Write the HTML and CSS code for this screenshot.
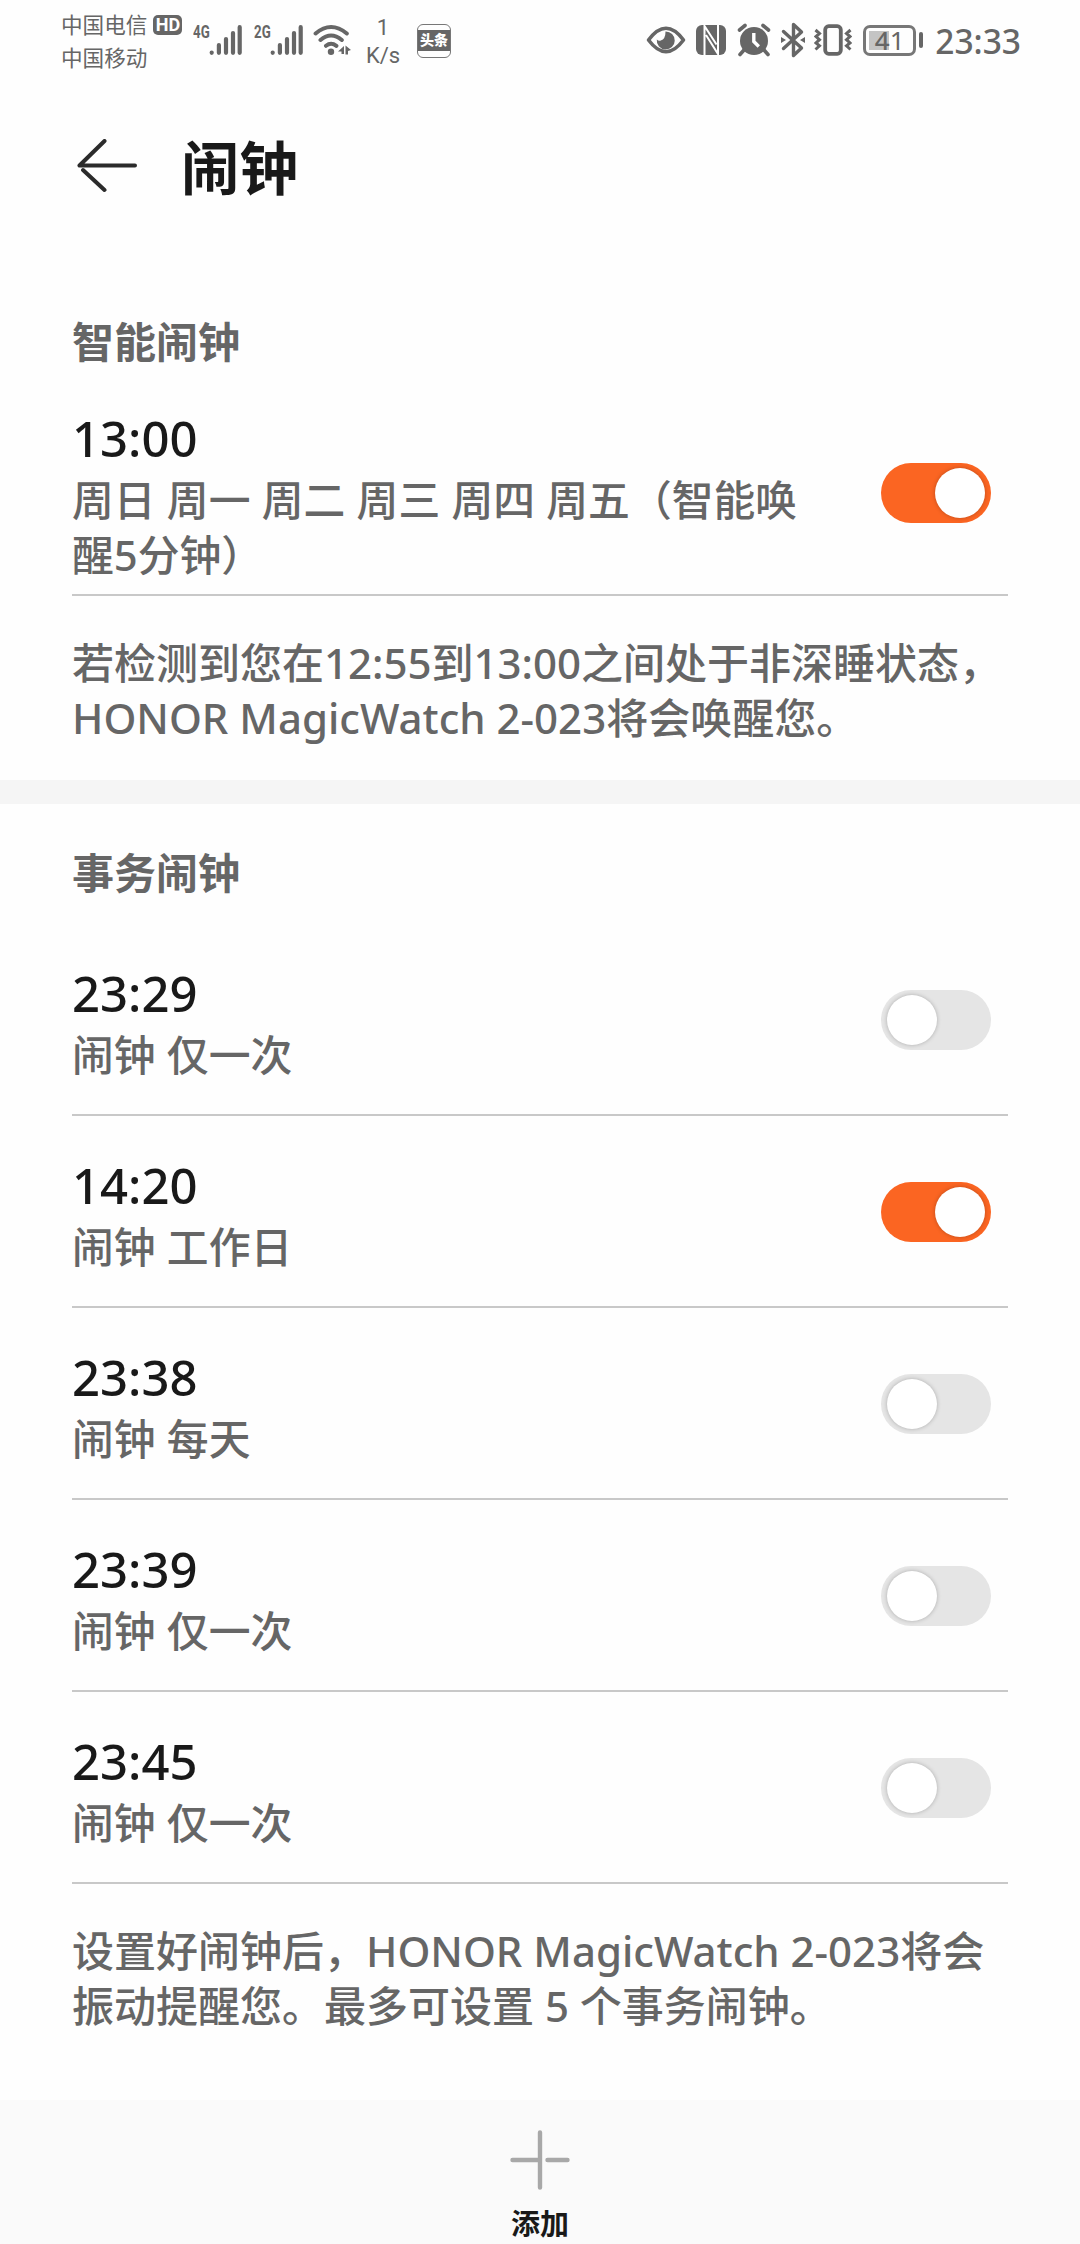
FILE: index.html
```html
<!DOCTYPE html>
<html lang="zh-CN">
<head>
<meta charset="utf-8">
<title>闹钟</title>
<link rel="stylesheet" href="styles.css">
</head>
<body>
<div class="screen">
  <header class="status">
    <div class="status-left">
      <div class="carriers">
        <div class="carrier">中国电信<span class="hd">HD</span></div>
        <div class="carrier">中国移动</div>
      </div>
      <div class="signal">
        <span class="net">4G</span>
        <svg width="34" height="32" viewBox="0 0 34 32" stroke="#666" stroke-width="4.2" stroke-linecap="round"><path d="M2.7 28.6v.2M9.900 21v7.8M17 15v13.8M24 9v19.8M30.7 3.2v25.6"/></svg>
      </div>
      <div class="signal">
        <span class="net">2G</span>
        <svg width="34" height="32" viewBox="0 0 34 32" stroke="#666" stroke-width="4.2" stroke-linecap="round"><path d="M2.7 28.6v.2M9.900 21v7.8M17 15v13.8M24 9v19.8M30.7 3.2v25.6"/></svg>
      </div>
      <svg class="wifi" width="38" height="32" viewBox="0 0 38 32"><g fill="none" stroke="#666" stroke-width="4" stroke-linecap="round"><path d="M2.6 9.5Q18 -3.5 33.8 9.5M7.5 16Q18 7 28.8 16M13 21.8Q18 17.8 23.4 21.8"/></g><circle cx="18" cy="27.800" r="3.200" fill="#666"/><path d="M31 22v8h-2.500v-2.500L25 27.500zM32.500 21.500l5.500 4.500-3 1v3.500h-2.500z" fill="#666"/></svg>
      <div class="speed"><span>1</span><span>K/s</span></div>
      <div class="news"><span>头条</span></div>
    </div>
    <div class="status-right">
      <svg width="40" height="34" viewBox="0 0 40 34"><path d="M2.500 17Q20-6.500 37.500 17Q20 40.500 2.500 17z" fill="none" stroke="#666" stroke-width="3.600" stroke-linejoin="round"/><path d="M19.500 8.500a9 9 0 1 1-8.700 8q1.700 1.700 4 1 4.800-1.500 4.700-9z" fill="#666"/></svg>
      <svg class="nfc" width="30" height="34" viewBox="0 0 30 34"><rect y="2" width="30" height="30" rx="6" fill="#666"/><path d="M8.500 32V3L20.500 21.500M10 12L22 31V2" fill="none" stroke="#fff" stroke-width="2"/></svg>
      <svg class="alarm" width="34" height="34" viewBox="0 0 34 34"><circle cx="17" cy="18" r="14" fill="#666"/><path d="M2.500 7L8 2.500M31.500 7L26 2.500M7 27l-4 4.500M27 27l4 4.500" stroke="#666" stroke-width="3.600" stroke-linecap="round"/><path d="M16.800 10v8.500l5 5" fill="none" stroke="#fff" stroke-width="3.400"/></svg>
      <svg class="bt" width="24" height="36" viewBox="0 0 24 36"><path d="M2.500 9.500L20.500 26L12.500 33.500V2.500L20.500 10L2.500 26.500" fill="none" stroke="#666" stroke-width="3.400" stroke-linejoin="round" stroke-linecap="round"/><path d="M0 15l5 3-5 3zM24 15l-5 3 5 3z" fill="#666"/></svg>
      <svg class="vibe" width="38" height="34" viewBox="0 0 38 34" fill="none" stroke="#666"><rect x="11.200" y="3.200" width="15.600" height="27.600" rx="3.500" stroke-width="3.800"/><path d="M1.500 7l4 3.500-3.500 3 3.500 3.200-3.500 3.200 3.500 3-4 3.600M36.500 7l-4 3.500 3.500 3-3.500 3.200 3.500 3.200-3.500 3 4 3.600" stroke-width="3"/></svg>
      <div class="battery"><b>4</b>1</div>
      <i class="nub"></i>
      <span class="clock">23:33</span>
    </div>
  </header>

  <div class="titlebar">
    <svg width="60" height="56" viewBox="0 0 60 56" fill="none" stroke="#2b2b2b" stroke-width="4" stroke-linecap="round"><path d="M27.500 2L2.500 26.500H58M27.500 51L6 31" stroke-linejoin="round"/></svg>
    <h1>闹钟</h1>
  </div>

  <section class="smart">
    <h2>智能闹钟</h2>
    <div class="alarm-row alarm-row-smart">
      <div class="info">
        <div class="time">13:00</div>
        <div class="desc">周日 周一 周二 周三 周四 周五（智能唤<br>醒5分钟）</div>
      </div>
      <div class="switch on"></div>
    </div>
    <p class="note">若检测到您在12:55到13:00之间处于非深睡状态，<br>HONOR MagicWatch 2-023将会唤醒您。</p>
  </section>

  <section class="events">
    <h2>事务闹钟</h2>
    <div class="alarm-row"><div class="info"><div class="time">23:29</div><div class="desc">闹钟 仅一次</div></div><div class="switch"></div></div>
    <div class="alarm-row"><div class="info"><div class="time">14:20</div><div class="desc">闹钟 工作日</div></div><div class="switch on"></div></div>
    <div class="alarm-row"><div class="info"><div class="time">23:38</div><div class="desc">闹钟 每天</div></div><div class="switch"></div></div>
    <div class="alarm-row"><div class="info"><div class="time">23:39</div><div class="desc">闹钟 仅一次</div></div><div class="switch"></div></div>
    <div class="alarm-row"><div class="info"><div class="time">23:45</div><div class="desc">闹钟 仅一次</div></div><div class="switch"></div></div>
    <p class="note">设置好闹钟后，HONOR MagicWatch 2-023将会<br>振动提醒您。最多可设置 5 个事务闹钟。</p>
  </section>

  <footer class="toolbar">
    <svg width="60" height="60" viewBox="0 0 60 60" stroke="#a8a8a8" stroke-width="4.400" stroke-linecap="round"><path d="M30 2.500v55M2.500 30H30M37.500 30h20"/></svg>
    <span>添加</span>
  </footer>
</div>
</body>
</html>
```

FILE: styles.css
```css
* { box-sizing: border-box; }
body {
  margin: 0;
  background: #fefefe;
  font-family: "Noto Sans", "Noto Sans CJK SC", sans-serif;
  color: #191919;
}
.screen {
  width: 1080px;
  height: 2244px;
  display: flex;
  flex-direction: column;
  overflow: hidden;
}
svg { display: block; flex: none; }

.status {
  height: 80px;
  display: flex;
  justify-content: space-between;
  align-items: flex-start;
  padding: 0 59px 0 61px;
  color: #666;
}
.status-left { display: flex; align-items: flex-start; }
.carriers { width: 132px; padding-top: 8px; }
.carrier {
  display: flex;
  align-items: center;
  gap: 6px;
  height: 33px;
  font-size: 21.6px;
  line-height: 33px;
  white-space: nowrap;
}
.hd {
  width: 29px;
  height: 20px;
  border-radius: 5px;
  background: #666;
  color: #fff;
  font: 700 18px/20px Roboto, sans-serif;
  text-align: center;
}
.signal { display: flex; width: 61px; padding-top: 24px; }
.net {
  width: 16px;
  font: 700 19px/16px Roboto, sans-serif;
  transform: scaleX(.7);
  transform-origin: left;
}
.wifi { margin: 24px 0 0 -2px; }
.speed {
  width: 50px;
  margin-left: 7px;
  padding-top: 14px;
  display: flex;
  flex-direction: column;
  align-items: center;
  font: 400 22px/28px Roboto, sans-serif;
}
.news {
  width: 34px;
  height: 34px;
  margin: 24px 0 0 9px;
  padding-top: 5px;
  border: 1.5px solid #777;
  border-radius: 6px;
}
.news span {
  display: block;
  height: 21px;
  background: #666;
  color: #fff;
  font-size: 14px;
  font-weight: 900;
  line-height: 20px;
  text-align: center;
  white-space: nowrap;
}
.status-right { display: flex; align-items: center; height: 80px; }
.nfc { margin-left: 10px; }
.alarm { margin-left: 11px; }
.bt { margin-left: 10px; }
.vibe { margin-left: 9px; }
.battery {
  width: 53px;
  height: 31px;
  margin-left: 11px;
  border: 3px solid #777;
  border-radius: 7px;
  background: linear-gradient(#c4c4c4, #c4c4c4) 3px 3px / 20px 19px no-repeat;
  font-size: 26px;
  line-height: 25px;
  text-align: center;
}
.battery b { font-weight: 500; }
.nub { width: 4px; height: 16px; margin-left: 3px; border-radius: 2px; background: #666; }
.clock { margin-left: 12px; font-size: 33.5px; font-weight: 500; line-height: 40px; padding-top: 2px; }

.titlebar {
  height: 174px;
  display: flex;
  align-items: center;
  gap: 44px;
  padding: 0 77px;
}
.titlebar h1 { margin: 0; font-size: 58.5px; line-height: 70px; font-weight: 700; }

section { padding: 0 72px; }
h2 {
  margin: 0;
  color: #666;
  font-size: 42px;
  font-weight: 700;
  line-height: 56px;
}
.smart { height: 550px; padding-top: 60px; border-bottom: 24px solid #f5f5f5; }
.events { height: 1296px; padding-top: 41px; }
.alarm-row {
  height: 192px;
  display: flex;
  align-items: center;
  justify-content: space-between;
  padding: 2px 17px 0 0;
  border-bottom: 2px solid #c8c8c8;
}
.alarm-row-smart { height: 226px; padding-top: 22px; }
.events h2 { margin-bottom: 23px; }
.info { padding-top: 4px; }
.time {
  margin-bottom: 4px;
  font-size: 49px;
  font-weight: 500;
  line-height: 60px;
}
.desc, .note {
  color: #666;
  font-size: 42px;
  font-weight: 500;
  line-height: 55px;
  white-space: nowrap;
}
.desc { font-size: 41.8px; word-spacing: .4px; }
.note { margin: 39px 0 0; }
.switch {
  width: 110px;
  height: 60px;
  padding: 5px 6px;
  border-radius: 30px;
  background: #e5e5e5;
  display: flex;
}
.switch::after {
  content: "";
  width: 50px;
  height: 50px;
  border-radius: 50%;
  background: #fff;
  box-shadow: 0 0 4px rgba(0, 0, 0, .25);
}
.switch.on { background: #fb6522; justify-content: flex-end; }

.toolbar {
  height: 144px;
  padding-top: 30px;
  background: #fafafa;
  display: flex;
  flex-direction: column;
  align-items: center;
}
.toolbar span { margin-top: 14px; font-size: 29px; font-weight: 700; line-height: 40px; }
```
